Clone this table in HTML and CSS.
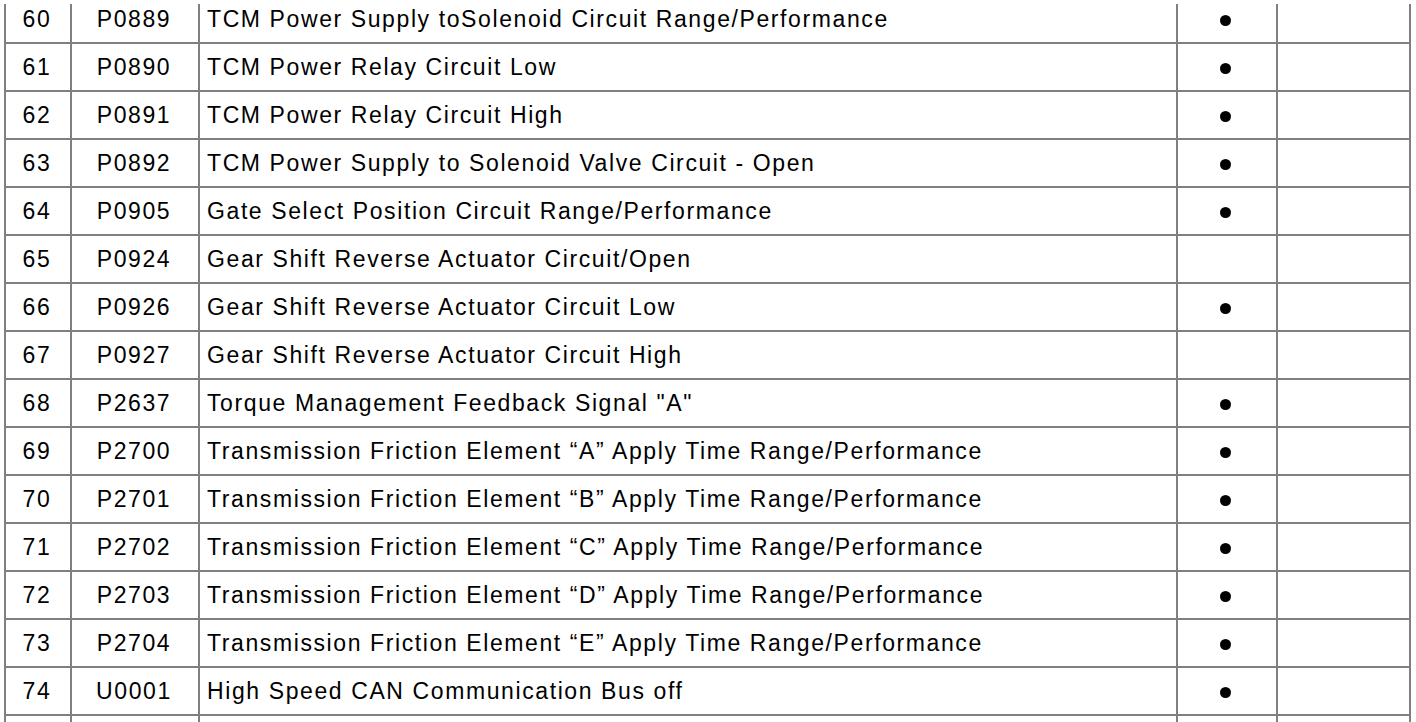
FILE: index.html
```html
<!DOCTYPE html>
<html>
<head>
<meta charset="utf-8">
<link rel="stylesheet" href="styles.css">
</head>
<body>
<div class="page">
<div class="sheet">
<table class="dtc">
<colgroup>
<col class="c-no"><col class="c-code"><col class="c-desc"><col class="c-mark"><col class="c-extra">
</colgroup>
<tbody>
<tr><td class="no">60</td><td class="code">P0889</td><td class="desc">TCM Power Supply toSolenoid Circuit Range/Performance</td><td class="mark"><span class="dot"></span></td><td></td></tr>
<tr><td class="no">61</td><td class="code">P0890</td><td class="desc">TCM Power Relay Circuit Low</td><td class="mark"><span class="dot"></span></td><td></td></tr>
<tr><td class="no">62</td><td class="code">P0891</td><td class="desc">TCM Power Relay Circuit High</td><td class="mark"><span class="dot"></span></td><td></td></tr>
<tr><td class="no">63</td><td class="code">P0892</td><td class="desc">TCM Power Supply to Solenoid Valve Circuit - Open</td><td class="mark"><span class="dot"></span></td><td></td></tr>
<tr><td class="no">64</td><td class="code">P0905</td><td class="desc">Gate Select Position Circuit Range/Performance</td><td class="mark"><span class="dot"></span></td><td></td></tr>
<tr><td class="no">65</td><td class="code">P0924</td><td class="desc">Gear Shift Reverse Actuator Circuit/Open</td><td class="mark"></td><td></td></tr>
<tr><td class="no">66</td><td class="code">P0926</td><td class="desc">Gear Shift Reverse Actuator Circuit Low</td><td class="mark"><span class="dot"></span></td><td></td></tr>
<tr><td class="no">67</td><td class="code">P0927</td><td class="desc">Gear Shift Reverse Actuator Circuit High</td><td class="mark"></td><td></td></tr>
<tr><td class="no">68</td><td class="code">P2637</td><td class="desc">Torque Management Feedback Signal "A"</td><td class="mark"><span class="dot"></span></td><td></td></tr>
<tr><td class="no">69</td><td class="code">P2700</td><td class="desc">Transmission Friction Element “A” Apply Time Range/Performance</td><td class="mark"><span class="dot"></span></td><td></td></tr>
<tr><td class="no">70</td><td class="code">P2701</td><td class="desc">Transmission Friction Element “B” Apply Time Range/Performance</td><td class="mark"><span class="dot"></span></td><td></td></tr>
<tr><td class="no">71</td><td class="code">P2702</td><td class="desc">Transmission Friction Element “C” Apply Time Range/Performance</td><td class="mark"><span class="dot"></span></td><td></td></tr>
<tr><td class="no">72</td><td class="code">P2703</td><td class="desc">Transmission Friction Element “D” Apply Time Range/Performance</td><td class="mark"><span class="dot"></span></td><td></td></tr>
<tr><td class="no">73</td><td class="code">P2704</td><td class="desc">Transmission Friction Element “E” Apply Time Range/Performance</td><td class="mark"><span class="dot"></span></td><td></td></tr>
<tr><td class="no">74</td><td class="code">U0001</td><td class="desc">High Speed CAN Communication Bus off</td><td class="mark"><span class="dot"></span></td><td></td></tr>
<tr><td class="no"></td><td class="code"></td><td class="desc"></td><td class="mark"></td><td></td></tr>
</tbody>
</table>
</div>
</div>
</body>
</html>
```

FILE: styles.css
```css
html, body {
  margin: 0;
  padding: 0;
  background: #ffffff;
}

.page {
  height: 722px;
  overflow: hidden;
  padding-top: 4px;
  padding-left: 4px;
  box-sizing: border-box;
}

.sheet {
  height: 718px;
  overflow: hidden;
}

.dtc {
  border-collapse: collapse;
  table-layout: fixed;
  width: 1405px;
  margin-top: -10px;
  font-family: "Liberation Sans", Arial, sans-serif;
  font-size: 23px;
  letter-spacing: 1.6px;
  color: #000000;
}

.c-no { width: 66px; }
.c-code { width: 128px; }
.c-desc { width: 978px; }
.c-mark { width: 100px; }
.c-extra { width: 133px; }

.dtc td {
  border: 2px solid #808080;
  height: 46px;
  padding: 0;
  vertical-align: middle;
  line-height: 26px;
  white-space: nowrap;
}

.dtc .no,
.dtc .code,
.dtc .mark {
  text-align: center;
}

.dtc .no {
  padding-right: 2px;
}

.dtc .code {
  padding-right: 2px;
}

.dtc .mark {
  padding-right: 3px;
}

.dtc .desc {
  padding-left: 7px;
}

.dot {
  display: inline-block;
  width: 11px;
  height: 11px;
  border-radius: 50%;
  background: #000000;
  vertical-align: middle;
}
```
